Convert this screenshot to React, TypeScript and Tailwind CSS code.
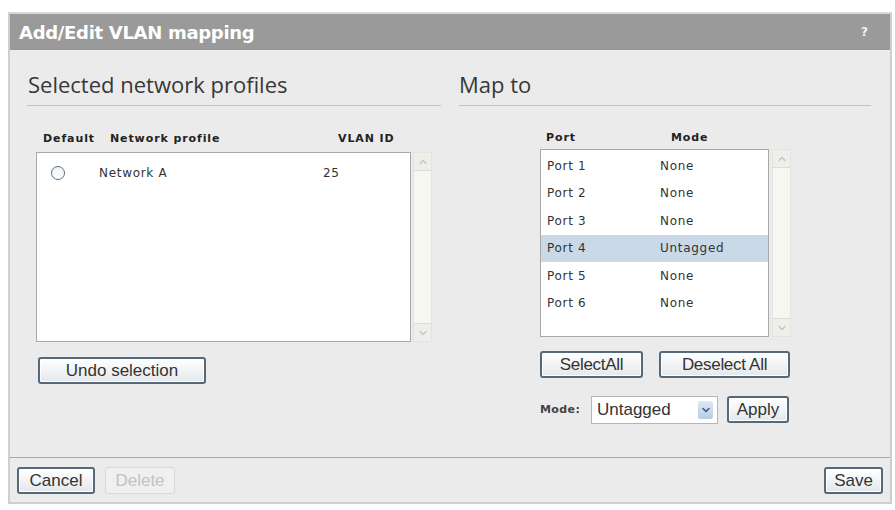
import { ChevronDown, ChevronUp } from "lucide-react";

const ports = [
	{ port: "Port 1", mode: "None" },
	{ port: "Port 2", mode: "None" },
	{ port: "Port 3", mode: "None" },
	{ port: "Port 4", mode: "Untagged", selected: true },
	{ port: "Port 5", mode: "None" },
	{ port: "Port 6", mode: "None" },
];

function ScrollTrack({ height }: { height: string }) {
	return (
		<div className={`${height} w-[19px] flex flex-col justify-between bg-[#f7f7f2] border border-[#e4e4de]`}>
			<div className="h-[18px] flex items-center justify-center border-b border-[#dcdcd6] bg-[#eeeeea]">
				<ChevronUp className="w-3 h-3 text-[#c4c4c4]" strokeWidth={2.5} />
			</div>
			<div className="h-[18px] flex items-center justify-center border-t border-[#dcdcd6] bg-[#eeeeea]">
				<ChevronDown className="w-3 h-3 text-[#c4c4c4]" strokeWidth={2.5} />
			</div>
		</div>
	);
}

const btn =
	"h-[27px] rounded-[3px] border-2 border-[#56697a] bg-gradient-to-b from-[#ffffff] to-[#e4e8eb] text-[#333] text-[17px] leading-none font-['Liberation_Sans',Arial,sans-serif] shadow-[inset_0_0_0_1px_#ffffff]";

const cell = "text-[12px] tracking-[0.7px] text-[#333] font-['DejaVu_Sans',Verdana,sans-serif]";
const head = "text-[11px] tracking-[0.9px] font-bold text-[#222] font-['DejaVu_Sans',Verdana,sans-serif]";

export default function App() {
	return (
		<div className="w-[895px] h-[510px] bg-white pt-[12px] px-[8px]">
			<div className="w-[884px] h-[492px] border-2 border-[#cfcfcf] border-t-[#d8d8d8] flex flex-col bg-[#ebebeb]">
				{/* Header */}
				<div className="h-[36px] bg-[#9a9a9a] flex items-center justify-between pl-[9px] pr-[22px]">
					<span className="text-white font-bold text-[18px] font-['DejaVu_Sans',Verdana,sans-serif] tracking-[-0.3px]">
						Add/Edit VLAN mapping
					</span>
					<span className="text-[#f4f4f4] font-bold text-[12px] font-['DejaVu_Sans',sans-serif]">?</span>
				</div>

				{/* Body */}
				<div className="flex-1 flex pt-[20px] pl-[17px] border-b border-[#a9a9a9]">
					{/* Left column */}
					<div className="w-[414px]">
						<div className="border-b border-[#c4c4b8] pb-[7px] pl-[1px]">
							<h2 className="text-[22px] text-[#383838] font-['Open_Sans','DejaVu_Sans',sans-serif] leading-[28px]">
								Selected network profiles
							</h2>
						</div>
						<div className={`flex ${head} mt-[26px] h-[14px] items-center`}>
							<span className="pl-[16px] w-[83px]">Default</span>
							<span className="w-[228px]">Network profile</span>
							<span>VLAN ID</span>
						</div>
						<div className="flex mt-[6px] ml-[9px] gap-[2px]">
							<div className="w-[375px] h-[190px] bg-white border border-[#a8a8a8]">
								<div className={`flex items-center h-[40px] ${cell}`}>
									<span className="ml-[14px] w-[14px] h-[14px] shrink-0 rounded-full border-[1.5px] border-[#53708a] bg-gradient-to-b from-[#f0f3f6] to-[#ffffff]" />
									<span className="ml-[34px] w-[224px]">Network A</span>
									<span>25</span>
								</div>
							</div>
							<ScrollTrack height="h-[190px]" />
						</div>
						<button className={`${btn} mt-[15px] ml-[11px] w-[168px]`}>Undo selection</button>
					</div>

					{/* Right column */}
					<div className="ml-[18px] w-[412px]">
						<div className="border-b border-[#c4c4b8] pb-[7px]">
							<h2 className="text-[22px] text-[#383838] font-['Open_Sans','DejaVu_Sans',sans-serif] leading-[28px]">Map to</h2>
						</div>
						<div className="ml-[81px]">
							<div className={`flex ${head} mt-[25px] h-[14px] items-center`}>
								<span className="pl-[6px] w-[131px]">Port</span>
								<span>Mode</span>
							</div>
							<div className="flex mt-[4px] gap-[3px]">
								<div className="w-[229px] h-[188px] bg-white border border-[#a8a8a8] pt-[2px]">
									{ports.map((p) => (
										<div
											key={p.port}
											className={`flex items-center h-[27.5px] ${cell} ${p.selected ? "bg-[#c9d9e7]" : ""}`}
										>
											<span className="pl-[6px] w-[119px]">{p.port}</span>
											<span>{p.mode}</span>
										</div>
									))}
								</div>
								<ScrollTrack height="h-[188px]" />
							</div>
							<div className="flex mt-[14px] gap-[16px]">
								<button className={`${btn} w-[103px] tracking-[-0.3px]`}>SelectAll</button>
								<button className={`${btn} w-[131px] tracking-[-0.3px]`}>Deselect All</button>
							</div>
							<div className="flex items-center mt-[18px]">
								<span className="text-[11px] tracking-[0.4px] font-bold text-[#444] font-['DejaVu_Sans',Verdana,sans-serif] w-[51px]">
									Mode:
								</span>
								<div className="w-[127px] h-[28px] bg-white border border-[#b5b5b5] flex items-center justify-between pl-[5px] pr-[4px]">
									<span className="text-[17px] text-[#333] font-['Liberation_Sans',Arial,sans-serif]">Untagged</span>
									<span className="w-[15px] h-[18px] bg-gradient-to-b from-[#dfe8f3] to-[#b9cbe2] flex items-center justify-center rounded-[2px]">
										<ChevronDown className="w-3 h-3 text-[#3d5a80]" strokeWidth={3} />
									</span>
								</div>
								<button className={`${btn} ml-[9px] w-[62px] -mt-[2px] border-[#2f4d6e]`}>Apply</button>
							</div>
						</div>
					</div>
				</div>

				{/* Footer */}
				<div className="h-[44px] flex items-center justify-between pl-[7px] pr-[7px]">
					<div className="flex items-center gap-[10px]">
						<button className={`${btn} w-[78px]`}>Cancel</button>
						<button className="h-[27px] w-[70px] rounded-[3px] border border-[#d9d9d9] bg-[#f0f0f0] text-[#c2c2c2] text-[17px] leading-none font-['Liberation_Sans',Arial,sans-serif]">
							Delete
						</button>
					</div>
					<button className={`${btn} w-[59px]`}>Save</button>
				</div>
			</div>
		</div>
	);
}
